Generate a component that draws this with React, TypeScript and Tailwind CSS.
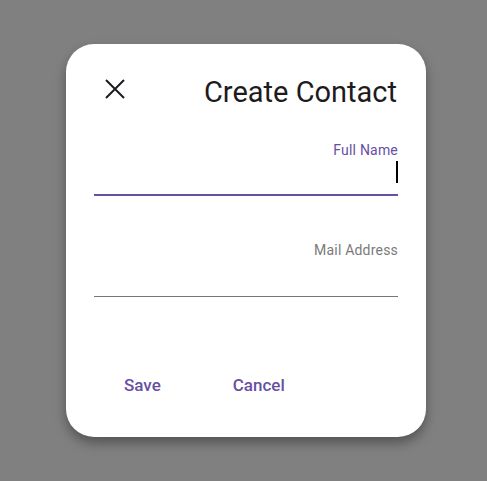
import React from "react";

export default function App() {
  return (
    <div
      className="w-[487px] h-[481px] bg-[#808080] pt-[44px] pl-[66px] overflow-hidden"
      style={{ fontFamily: "Roboto, 'Noto Sans', sans-serif" }}
    >
      <div className="w-[360px] h-[393px] bg-white rounded-[28px] shadow-[0_6px_12px_rgba(0,0,0,0.35)] px-[28px] pt-[28px] flex flex-col">
        <div className="h-[40px] flex justify-between items-start">
          <button className="ml-[9px] mt-[5px] w-[24px] h-[24px] text-[#1d1b20]" aria-label="Close">
            <svg width="24" height="24" viewBox="0 0 24 24" fill="none" stroke="currentColor" strokeWidth="2">
              <path d="M3 3L21 21M21 3L3 21" />
            </svg>
          </button>
          <h1 className="text-[29px] leading-[40px] font-normal text-[#1d1b20] mr-[1px]">Create Contact</h1>
        </div>

        <div className="mt-[28px] flex flex-col">
          <div className="text-[14px] leading-[20px] tracking-[0.2px] text-[#6750a4] text-right">Full Name</div>
          <div className="h-[34px] flex justify-end items-start">
            <div className="w-[2px] h-[22px] bg-black mt-[1px]" />
          </div>
          <div className="h-[2px] bg-[#6750a4]" />
        </div>

        <div className="mt-[44px] flex flex-col">
          <div className="text-[14px] leading-[20px] tracking-[0.2px] text-[#7a7a7a] text-right">Mail Address</div>
          <div className="h-[36px]" />
          <div className="h-[1px] bg-[#79747e]" />
        </div>

        <div className="mt-[76px] flex pl-[30px] gap-[72px]">
          <button className="text-[17px] leading-[24px] font-medium text-[#6750a4]">Save</button>
          <button className="text-[17px] leading-[24px] font-medium text-[#6750a4]">Cancel</button>
        </div>
      </div>
    </div>
  );
}
